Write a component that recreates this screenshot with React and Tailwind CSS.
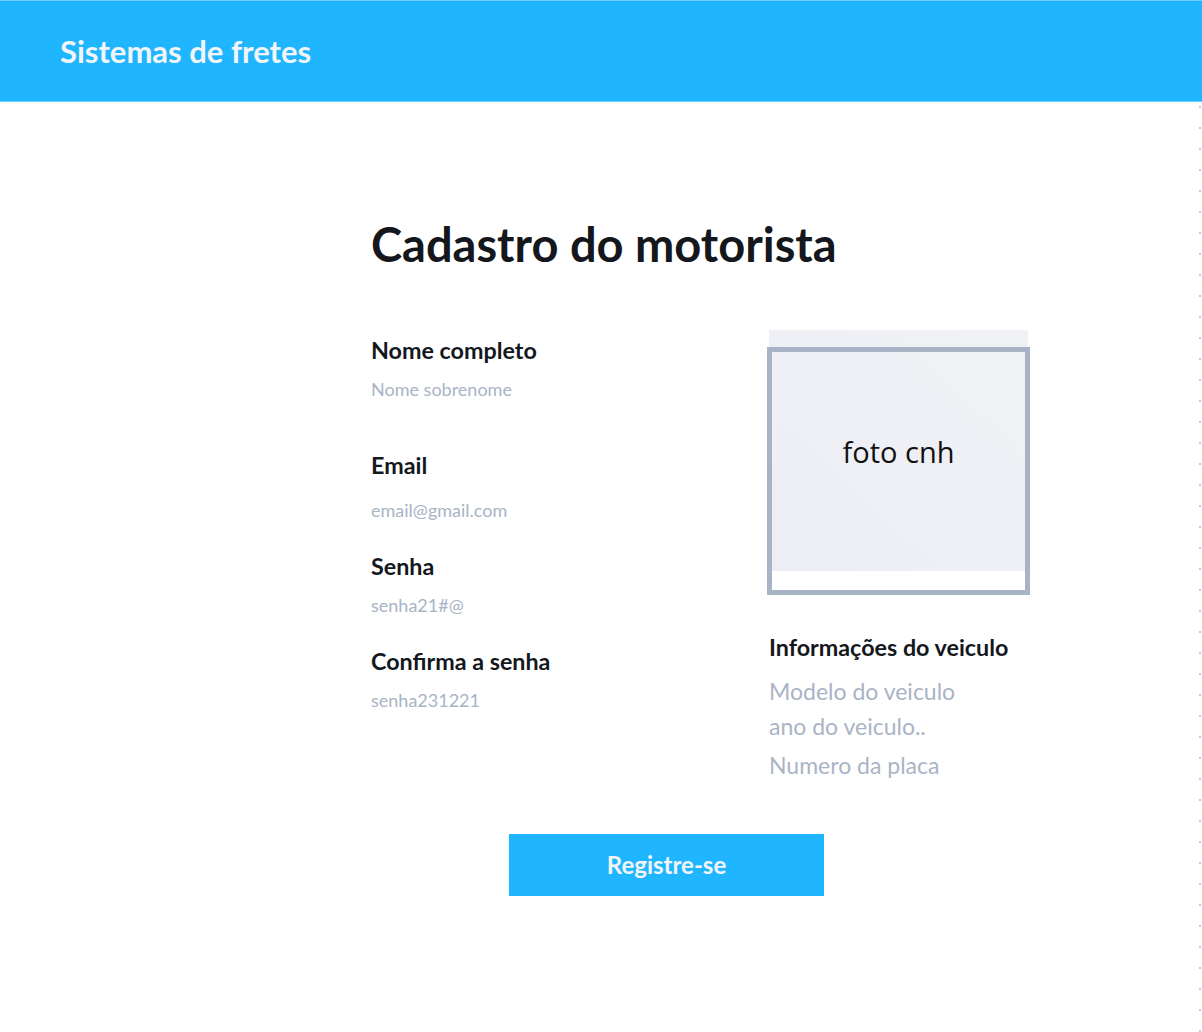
import React from 'react';

function Field({ label, placeholder, gap }) {
  return (
    <div className="flex flex-col">
      <label className="text-[23.3px] font-bold leading-[28px] text-[#14171c]">{label}</label>
      <input
        className={`${gap} w-[260px] bg-transparent text-[18px] leading-[22px] text-[#a9b4c6] placeholder-[#a9b4c6] outline-none`}
        placeholder={placeholder}
      />
    </div>
  );
}

export default function App() {
  return (
    <div className="min-h-[1032px] w-[1202px] bg-white font-['Lato',sans-serif]">
      <header className="flex h-[102px] items-center border-t border-b border-[#6fd0ff] bg-[#20b5ff] pl-[60px]">
        <h1 className="text-[31px] font-bold text-[#f1f5f9]">Sistemas de fretes</h1>
      </header>

      <div className="relative">
        <div className="absolute right-[1px] top-[4px] h-[930px] w-[2px] bg-[repeating-linear-gradient(to_bottom,#c8ccd2_0px,#c8ccd2_2px,transparent_2px,transparent_21px)]" />
      </div>

      <main className="pl-[371px] pt-[113px]">
        <h2 className="text-[47px] font-bold leading-[58px] text-[#14171c]">Cadastro do motorista</h2>

        <div className="mt-[57px] flex">
          <div className="flex w-[398px] flex-col pt-[6px]">
            <Field label="Nome completo" placeholder="Nome sobrenome" gap="mt-[14px]" />
            <div className="mt-[51px]">
              <Field label="Email" placeholder="email@gmail.com" gap="mt-[20px]" />
            </div>
            <div className="mt-[31px]">
              <Field label="Senha" placeholder="senha21#@" gap="mt-[14px]" />
            </div>
            <div className="mt-[31px]">
              <Field label="Confirma a senha" placeholder="senha231221" gap="mt-[14px]" />
            </div>
          </div>

          <div className="flex flex-col">
            <div className="relative h-[265px] w-[261px]">
              <div className="flex h-[241px] w-[259px] items-center justify-center bg-[linear-gradient(to_top_right,#eceef4,#f1f2f6)]">
                <span className="pt-[2px] font-['Open_Sans',sans-serif] text-[29px] text-[#111]">foto cnh</span>
              </div>
              <div className="absolute left-[-2px] top-[17px] h-[248px] w-[263px] border-[5px] border-[#a8b4c6]" />
            </div>
            <h3 className="mt-[38px] text-[23.3px] font-bold leading-[28px] text-[#14171c]">Informações do veiculo</h3>
            <div className="mt-[16px] flex flex-col text-[23px] leading-[28px] text-[#a9b4c6]">
              <span>Modelo do veiculo</span>
              <span className="mt-[7px]">ano do veiculo..</span>
              <span className="mt-[11px]">Numero da placa</span>
            </div>
          </div>
        </div>

        <button className="ml-[138px] mt-[55px] h-[62px] w-[315px] bg-[#20b5ff] text-[24px] font-bold text-[#f1f5f9]">
          Registre-se
        </button>
      </main>
    </div>
  );
}
